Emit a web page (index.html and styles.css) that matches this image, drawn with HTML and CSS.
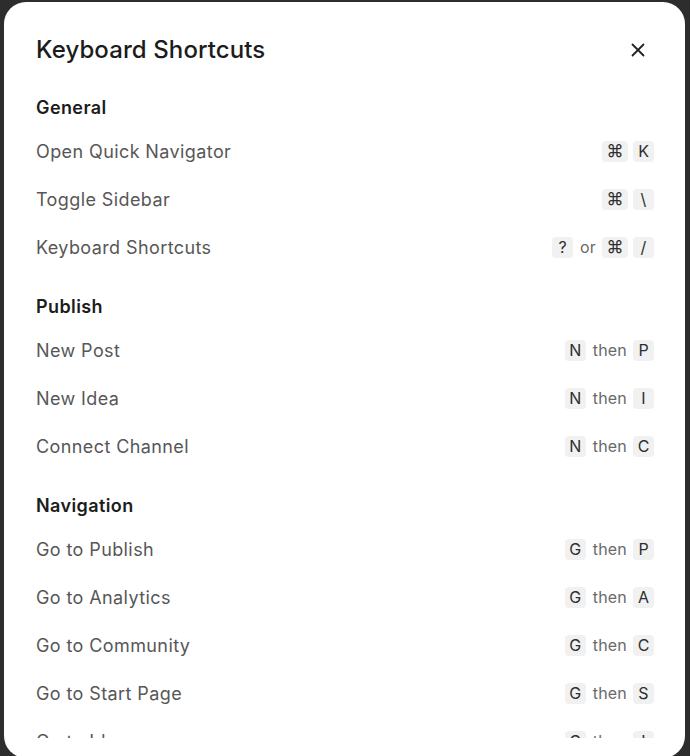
FILE: index.html
```html
<!DOCTYPE html>
<html lang="en">
<head>
<meta charset="utf-8">
<title>Keyboard Shortcuts</title>
<link rel="stylesheet" href="styles.css">
</head>
<body>
<div class="modal">
  <header class="modal-header">
    <h1 class="title">Keyboard Shortcuts</h1>
    <button class="close" aria-label="Close">
      <svg width="14" height="14" viewBox="0 0 14 14"><path d="M1.5 1.5 L12.5 12.5 M12.5 1.5 L1.5 12.5" stroke="#222" stroke-width="1.8" stroke-linecap="round" fill="none"/></svg>
    </button>
  </header>
  <div class="modal-body">
    <section class="group">
      <h2 class="group-title">General</h2>
      <div class="row"><span class="label">Open Quick Navigator</span><span class="keys"><kbd class="key key-mod">⌘</kbd><kbd class="key">K</kbd></span></div>
      <div class="row"><span class="label">Toggle Sidebar</span><span class="keys"><kbd class="key key-mod">⌘</kbd><kbd class="key">\</kbd></span></div>
      <div class="row"><span class="label">Keyboard Shortcuts</span><span class="keys"><kbd class="key">?</kbd><span class="sep">or</span><kbd class="key key-mod">⌘</kbd><kbd class="key">/</kbd></span></div>
    </section>
    <section class="group">
      <h2 class="group-title">Publish</h2>
      <div class="row"><span class="label">New Post</span><span class="keys"><kbd class="key">N</kbd><span class="sep">then</span><kbd class="key">P</kbd></span></div>
      <div class="row"><span class="label">New Idea</span><span class="keys"><kbd class="key">N</kbd><span class="sep">then</span><kbd class="key">I</kbd></span></div>
      <div class="row"><span class="label">Connect Channel</span><span class="keys"><kbd class="key">N</kbd><span class="sep">then</span><kbd class="key">C</kbd></span></div>
    </section>
    <section class="group">
      <h2 class="group-title">Navigation</h2>
      <div class="row"><span class="label">Go to Publish</span><span class="keys"><kbd class="key">G</kbd><span class="sep">then</span><kbd class="key">P</kbd></span></div>
      <div class="row"><span class="label">Go to Analytics</span><span class="keys"><kbd class="key">G</kbd><span class="sep">then</span><kbd class="key">A</kbd></span></div>
      <div class="row"><span class="label">Go to Community</span><span class="keys"><kbd class="key">G</kbd><span class="sep">then</span><kbd class="key">C</kbd></span></div>
      <div class="row"><span class="label">Go to Start Page</span><span class="keys"><kbd class="key">G</kbd><span class="sep">then</span><kbd class="key">S</kbd></span></div>
      <div class="row"><span class="label">Go to Ideas</span><span class="keys"><kbd class="key">G</kbd><span class="sep">then</span><kbd class="key">I</kbd></span></div>
    </section>
  </div>
</div>
</body>
</html>
```
FILE: styles.css
```css
html, body {
  margin: 0;
  padding: 0;
  height: 100%;
  overflow: hidden;
}
body {
  background: #2d2d2d;
  font-family: Inter, "Noto Sans", "Liberation Sans", sans-serif;
}
.modal {
  margin: 2px 0 0 4px;
  width: 681px;
  height: 756px;
  background: #ffffff;
  border-radius: 22px;
  display: flex;
  flex-direction: column;
  padding: 32px 31px 20px 32px;
  box-sizing: border-box;
  overflow: hidden;
}
.modal-header {
  display: flex;
  align-items: center;
  justify-content: space-between;
  height: 32px;
  flex: none;
}
.title {
  margin: 0;
  font-size: 24px;
  line-height: 32px;
  font-weight: 500;
  color: #1c1c1c;
  letter-spacing: 0.1px;
}
.close {
  width: 32px;
  height: 32px;
  border: 0;
  padding: 0;
  background: transparent;
  display: flex;
  align-items: center;
  justify-content: center;
}
.modal-body {
  flex: 1;
  overflow: hidden;
  margin-top: 28px;
}
.group + .group {
  margin-top: 22px;
}
.group-title {
  margin: 0 0 5px;
  font-size: 18px;
  line-height: 28px;
  font-weight: 600;
  color: #1c1c1c;
  letter-spacing: 0.4px;
}
.row {
  height: 48px;
  display: flex;
  align-items: center;
  justify-content: space-between;
}
.label {
  font-size: 18px;
  color: #575757;
  letter-spacing: 0.4px;
}
.keys {
  display: flex;
  align-items: center;
  gap: 5px;
}
.key {
  font-family: Inter, "Noto Sans", "DejaVu Sans", sans-serif;
  font-size: 16px;
  line-height: 21px;
  height: 21px;
  min-width: 21px;
  padding: 0 4px;
  box-sizing: border-box;
  text-align: center;
  background: #f1f1f1;
  border-radius: 4px;
  color: #2e2e2e;
}
.key-mod {
  min-width: 26px;
  font-size: 17px;
}
.sep {
  font-size: 16px;
  color: #6a6a6a;
  margin: 0 1px 0 2px;
  letter-spacing: 0.2px;
}
```
